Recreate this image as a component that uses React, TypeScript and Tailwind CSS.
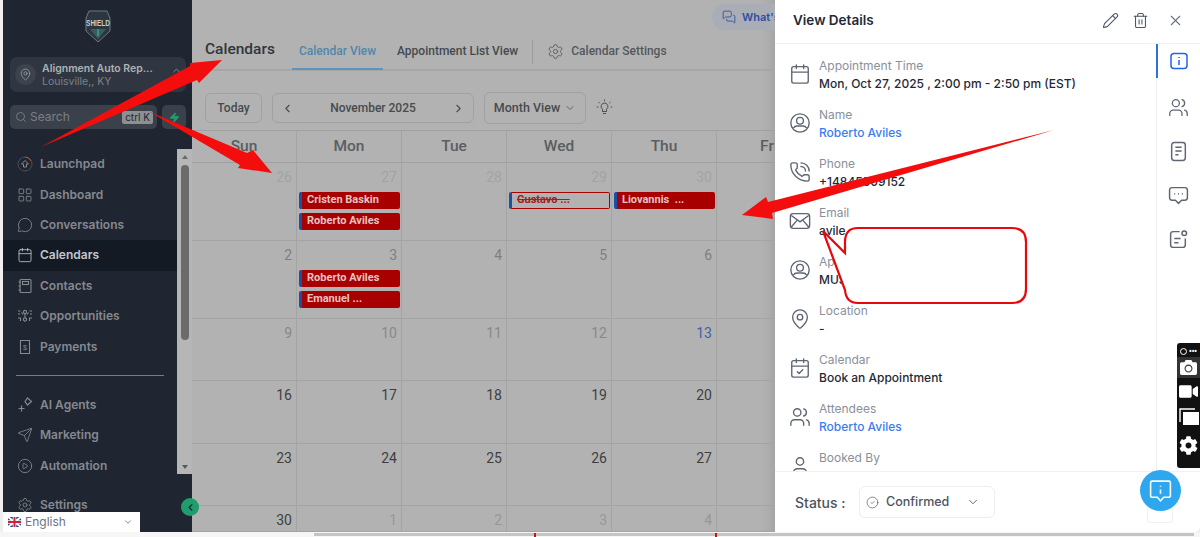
import React from 'react';
import {
  Calendar, CalendarCheck, ChevronDown, ChevronLeft, ChevronRight, ChevronUp, CircleCheck,
  LayoutGrid, MapPin, MessageCircle, MessagesSquare, Pencil,
  PhoneCall, Search, Send, Settings, Trash2, User, Users, X, Zap, CirclePlay,
} from 'lucide-react';
import { FaCamera, FaCog, FaVideo } from 'react-icons/fa';

type IconProps = { size?: number; strokeWidth?: number; className?: string };

const LaunchpadIcon = ({ size = 16 }: IconProps) => (
  <svg width={size} height={size} viewBox="0 0 16 16" fill="none" stroke="currentColor" strokeWidth="1">
    <circle cx="8" cy="8" r="7" stroke="#4a4f57" />
    <path d="M8 1 A7 7 0 0 1 14 5" stroke="#b5562d" />
    <path d="M8 4.5 L11.5 8 H9.5 V11 H6.5 V8 H4.5 Z" />
  </svg>
);

const ContactsIcon = ({ size = 16 }: IconProps) => (
  <svg width={size} height={size} viewBox="0 0 16 16" fill="none" stroke="currentColor" strokeWidth="1.1">
    <rect x="3" y="1.5" width="11" height="13" rx="1" />
    <rect x="5.5" y="3.5" width="6" height="3" />
    <path d="M1.5 4 H4 M1.5 8 H4 M1.5 12 H4" />
  </svg>
);

const OpportunitiesIcon = ({ size = 16 }: IconProps) => (
  <svg width={size} height={size} viewBox="0 0 16 16" fill="none" stroke="currentColor" strokeWidth="1.1">
    <circle cx="8" cy="4" r="1.6" />
    <circle cx="8" cy="11.5" r="1.6" />
    <path d="M1 3 H3.5 M1 6 H3 M12.5 3 H15 M13 6 H15 M1 10 H3.5 L3.5 13 M15 10 H12.5 L12.5 13 M8 6 V9.5" />
    <path d="M4.5 4.5 L6 6.5 M11.5 4.5 L10 6.5" />
  </svg>
);

const PaymentsIcon = ({ size = 16 }: IconProps) => (
  <svg width={size} height={size} viewBox="0 0 16 16" fill="none" stroke="currentColor" strokeWidth="1.1">
    <path d="M3 1.5 H13 M3.5 1.5 V14.5 H12.5 V1.5" />
    <text x="8" y="11" textAnchor="middle" fontSize="7" stroke="none" fill="currentColor" fontFamily="Liberation Sans, sans-serif">$</text>
  </svg>
);

const AgentsIcon = ({ size = 16 }: IconProps) => (
  <svg width={size} height={size} viewBox="0 0 16 16" fill="none" stroke="currentColor" strokeWidth="1.2">
    <path d="M10.5 1 L14.5 4.5 L10.5 8 L8 4.5 Z" />
    <path d="M4.5 8.5 V14.5 M1.5 11.5 H7.5" />
  </svg>
);

const BulbIcon = () => (
  <svg width="17" height="17" viewBox="0 0 17 17" fill="none" stroke="#4b4f52" strokeWidth="1">
    <path d="M8.5 4 A3.5 3.5 0 0 1 10.5 10.3 V12.5 H6.5 V10.3 A3.5 3.5 0 0 1 8.5 4 Z" />
    <path d="M7 14.5 H10 M8.5 .5 V2.2 M2.5 3 L3.7 4.2 M14.5 3 L13.3 4.2 M.8 8 H2.4 M14.6 8 H16.2" />
  </svg>
);

const PersonCircleIcon = ({ size = 24, className }: IconProps) => (
  <svg width={size} height={size} viewBox="0 0 24 24" fill="none" stroke="currentColor" strokeWidth="1.5" className={className}>
    <circle cx="12" cy="12" r="10" />
    <circle cx="12" cy="9.5" r="3.7" />
    <path d="M4.8 17.5 Q6 15.3 9 15.3 H15 Q18 15.3 19.2 17.5" />
  </svg>
);

const EnvelopeIcon = ({ size = 24, className }: IconProps) => (
  <svg width={size} height={size} viewBox="0 0 24 24" fill="none" stroke="currentColor" strokeWidth="1.5" className={className}>
    <rect x="1.5" y="4" width="21" height="16" rx="3" />
    <path d="M2.5 6 L12 13 L21.5 6 M2.5 18.5 L9 11 M21.5 18.5 L15 11" />
  </svg>
);

const InfoSquareIcon = ({ size = 20 }: IconProps) => (
  <svg width={size} height={size} viewBox="0 0 20 20" fill="none" stroke="currentColor" strokeWidth="1.5">
    <rect x="2" y="2.5" width="16" height="15" rx="3" />
    <path d="M10 6 V7 M10 9 V14" />
  </svg>
);

const NotesIcon = ({ size = 20 }: IconProps) => (
  <svg width={size} height={size} viewBox="0 0 20 20" fill="none" stroke="currentColor" strokeWidth="1.4">
    <rect x="3.5" y="1.5" width="13" height="17" rx="2.5" />
    <path d="M7 6 H13 M7 9.5 H13 M7 13 H10" />
  </svg>
);

const ChatDotsIcon = ({ size = 20 }: IconProps) => (
  <svg width={size} height={size} viewBox="0 0 20 20" fill="none" stroke="currentColor" strokeWidth="1.4">
    <path d="M4 2.5 H16 Q18.5 2.5 18.5 5 V12 Q18.5 14.5 16 14.5 H13 L10 17.5 L7 14.5 H4 Q1.5 14.5 1.5 12 V5 Q1.5 2.5 4 2.5 Z" />
    <path d="M6 8.5 H6.8 M9.6 8.5 H10.4 M13.2 8.5 H14" strokeWidth="1.8" />
  </svg>
);

const TaskNoteIcon = ({ size = 20 }: IconProps) => (
  <svg width={size} height={size} viewBox="0 0 20 20" fill="none" stroke="currentColor" strokeWidth="1.4">
    <path d="M11 2.5 H5 Q2.5 2.5 2.5 5 V15 Q2.5 17.5 5 17.5 H14 Q16.5 17.5 16.5 15 V9" />
    <circle cx="15.5" cy="4" r="2.2" />
    <path d="M6 9 H12 M6 13 H10" />
  </svg>
);

const navTop = [
  { label: 'Launchpad', icon: LaunchpadIcon },
  { label: 'Dashboard', icon: LayoutGrid },
  { label: 'Conversations', icon: MessageCircle },
  { label: 'Calendars', icon: Calendar, active: true },
  { label: 'Contacts', icon: ContactsIcon },
  { label: 'Opportunities', icon: OpportunitiesIcon },
  { label: 'Payments', icon: PaymentsIcon },
];

const navBottom = [
  { label: 'AI Agents', icon: AgentsIcon },
  { label: 'Marketing', icon: Send },
  { label: 'Automation', icon: CirclePlay },
];

type NavEntry = { label: string; icon: React.ElementType; active?: boolean };

const NavItem = ({ item }: { item: NavEntry }) => {
  const Icon = item.icon;
  return (
    <div className={`flex h-[30.4px] items-center gap-[7px] pl-[14px] ${item.active ? 'bg-[#141a24] text-[#c3c6ca]' : 'text-[#85898f]'}`}>
      <Icon size={16} strokeWidth={1.25} />
      <span className="text-[12px] font-semibold">{item.label}</span>
    </div>
  );
};

const Sidebar = () => (
  <aside className="flex w-[189px] shrink-0 flex-col font-['Inter',sans-serif]">
    {/* logo, location, search */}
    <div className="h-[149px] bg-[#1f2631] pt-[10px] pl-[7px] pr-[6px]">
      <div className="flex h-[33px] flex-col items-center">
        <svg width="28" height="33" viewBox="0 0 28 33" fill="none">
          <path d="M2 8 L5 1 H23 L26 8 V21 L14 32 L2 21 Z" fill="#2b3640" stroke="#6f777d" strokeWidth="1" />
          <path d="M6 19 H22 L14 29 Z" fill="#3f5a5c" />
          <path d="M13 19 h2 v7 h-2 z" fill="#1f9d85" />
          <text transform="translate(14 15.5) scale(1 1.5)" textAnchor="middle" fontSize="6.5" fontWeight="700" fill="#c9cdd0" fontFamily="Liberation Sans, sans-serif">SHIELD</text>
        </svg>
      </div>
      <div className="mt-[14px] flex h-[35px] items-center rounded-[7px] bg-[#2f3641] pl-[5px] pr-[4px]">
        <div className="flex h-[21px] w-[21px] items-center justify-center rounded-full bg-[#3c434d]">
          <MapPin size={13} strokeWidth={1.5} className="text-[#9a9ea3]" />
        </div>
        <div className="ml-[6px] flex-1 leading-[13px]">
          <div className="text-[10.5px] font-semibold text-[#aeb1b5]">Alignment Auto Rep...</div>
          <div className="text-[10.5px] text-[#7d8187]">Louisville,, KY</div>
        </div>
        <div className="flex flex-col items-center text-[#8b8f94]">
          <ChevronUp size={11} />
          <ChevronDown size={11} className="-mt-[3px]" />
        </div>
      </div>
      <div className="mt-[13px] flex items-center gap-[5px]">
        <div className="flex h-[24px] w-[147px] items-center rounded-[5px] bg-[#3a414b] pl-[5px] pr-[4px] text-[#7b7f85]">
          <Search size={12} strokeWidth={1.75} />
          <span className="ml-[3px] flex-1 text-[12px]">Search</span>
          <span className="rounded-[2px] bg-[#8d8f92] px-[3px] text-[10px] leading-[13px] text-[#1f2631]">ctrl K</span>
        </div>
        <div className="flex h-[24px] w-[24px] items-center justify-center rounded-[5px] bg-[#3a414b]">
          <Zap size={11} className="fill-[#1f9d6c] text-[#1f9d6c]" />
        </div>
      </div>
    </div>
    {/* nav with its scrollbar */}
    <div className="flex h-[325px]">
      <div className="w-[174px] bg-[#1f2631]">
        {navTop.map((item) => <NavItem key={item.label} item={item} />)}
        <div className="ml-[13px] mt-[13px] mb-[14px] h-px w-[148px] bg-[#787d84]" />
        {navBottom.map((item) => <NavItem key={item.label} item={item} />)}
      </div>
      <div className="flex w-[15px] flex-col items-center bg-[#b6b6b6] pt-[6px]">
        <div className="h-0 w-0 border-x-[3px] border-b-[4px] border-x-transparent border-b-[#6a6a6a]" />
        <div className="mt-[6px] h-[175px] w-[8px] rounded-full bg-[#6b6b6b]" />
        <div className="mt-auto mb-[5px] h-0 w-0 border-x-[3px] border-t-[4px] border-x-transparent border-t-[#5a5a5a]" />
      </div>
    </div>
    <div className="flex-1 bg-[#1f2631] pt-[16px]">
      <NavItem item={{ label: 'Settings', icon: Settings }} />
    </div>
  </aside>
);

const weekdays = ['Sun', 'Mon', 'Tue', 'Wed', 'Thu', 'Fri'];

type Ev = { name: string; cancelled?: boolean };
type Day = { n: number; tone: string; events?: Ev[] };

const dim = 'text-[#a3a3a3]';
const mid = 'text-[#7f7f7f]';
const mid2 = 'text-[#898989]';
const dark = 'text-[#3f3f3f]';
const next = 'text-[#979797]';

// Friday's numbers sit behind the details panel, so those cells stay empty
const weeks: (Day | null)[][] = [
  [
    { n: 26, tone: dim },
    { n: 27, tone: dim, events: [{ name: 'Cristen Baskin' }, { name: 'Roberto Aviles' }] },
    { n: 28, tone: dim },
    { n: 29, tone: dim, events: [{ name: 'Gustavo ...', cancelled: true }] },
    { n: 30, tone: dim, events: [{ name: 'Liovannis  ...' }] },
    null,
  ],
  [
    { n: 2, tone: mid },
    { n: 3, tone: mid, events: [{ name: 'Roberto Aviles' }, { name: 'Emanuel ...' }] },
    { n: 4, tone: mid },
    { n: 5, tone: mid },
    { n: 6, tone: mid },
    null,
  ],
  [
    { n: 9, tone: mid2 },
    { n: 10, tone: mid2 },
    { n: 11, tone: mid2 },
    { n: 12, tone: mid2 },
    { n: 13, tone: 'text-[#3f5fae]' },
    null,
  ],
  [...[16, 17, 18, 19, 20].map((n) => ({ n, tone: dark })), null],
  [...[23, 24, 25, 26, 27].map((n) => ({ n, tone: dark })), null],
  [
    { n: 30, tone: dark },
    { n: 1, tone: next },
    { n: 2, tone: next },
    { n: 3, tone: next },
    { n: 4, tone: next },
    null,
  ],
];

const EventChip = ({ ev }: { ev: Ev }) =>
  ev.cancelled ? (
    <div className="flex h-[17px] w-[101px] items-center rounded-[2px] border border-[#a80000] border-l-[3px] border-l-[#1c4fa8] pl-[5px] text-[11px] font-bold text-[#a02020] line-through">
      {ev.name}
    </div>
  ) : (
    <div className="flex h-[17px] w-[101px] items-center rounded-[2px] border-l-[3px] border-l-[#1c4fa8] bg-[#a80000] pl-[5px] text-[11px] font-bold whitespace-pre text-[#e6c3c3]">
      {ev.name}
    </div>
  );

const CalendarGrid = () => (
  <div className="w-[630px] flex-1 overflow-hidden font-['Roboto',sans-serif]">
    <div className="grid h-[33px] grid-cols-[105px_105px_105px_105px_105px_105px] border-y border-[#a0a0a0]">
      {weekdays.map((d) => (
        <div key={d} className="flex items-center justify-center border-r border-[#a4a4a4] pt-[1px] text-[15.5px] font-medium text-[#5a5e60]">{d}</div>
      ))}
    </div>
    <div className="grid grid-cols-[105px_105px_105px_105px_105px_105px] grid-rows-[78px_78px_62px_63px_62px_26px]">
      {weeks.flat().map((day, i) => (
        <div key={i} className="overflow-hidden border-r border-b border-[#a4a4a4] pt-[5px] pl-[2px] pr-[4px]">
          {day && <div className={`h-[21px] text-right text-[14px] leading-[18px] ${day.tone}`}>{day.n}</div>}
          <div className="mt-[3px] flex flex-col gap-[3.5px]">
            {day?.events?.map((ev) => <EventChip key={ev.name} ev={ev} />)}
          </div>
        </div>
      ))}
    </div>
  </div>
);

const MainArea = () => (
  <main className="relative flex min-w-0 flex-1 flex-col overflow-hidden bg-[#b2b2b2] shadow-[inset_-14px_0_14px_-12px_rgba(0,0,0,0.12)]">
    {/* top strip */}
    <div className="flex h-[35px] shrink-0 items-start pt-[4px] pl-[520px]">
      <div className="flex h-[26px] w-[90px] shrink-0 items-center gap-[6px] rounded-full bg-[#a8adb6] pl-[10px] font-['Inter',sans-serif] text-[11px] font-semibold text-[#2f4f9e]">
        <MessagesSquare size={14} strokeWidth={1.5} />
        <span>What's</span>
      </div>
    </div>
    {/* title + tabs */}
    <div className="flex h-[36px] shrink-0 items-start border-b-2 border-[#a6a6a6] pl-[13px] font-['Roboto',sans-serif]">
      <span className="mt-[2px] w-[69px] text-[15.5px] leading-[24px] font-medium text-[#333638]">Calendars</span>
      <div className="ml-[18px] flex h-[35px] w-[91px] justify-center border-b-2 border-[#5d94b8] pt-[7px] text-[12px] font-medium text-[#4f87ad]">Calendar View</div>
      <span className="ml-[14px] mt-[7px] text-[12px] font-medium text-[#454a4e]">Appointment List View</span>
      <div className="ml-[14px] mt-[5px] h-[24px] w-px bg-[#9a9a9a]" />
      <Settings size={17} strokeWidth={1.25} className="ml-[14px] mt-[8px] text-[#55595c]" />
      <span className="ml-[7px] mt-[7px] text-[12px] font-medium text-[#54585b]">Calendar Settings</span>
    </div>
    {/* toolbar */}
    <div className="flex h-[59px] shrink-0 items-start pl-[13px] pt-[22px] font-['Roboto',sans-serif] text-[12px] font-medium text-[#474b4e]">
      <div className="flex h-[30px] w-[57px] items-center justify-center rounded-[6px] border border-[#a0a0a0]">Today</div>
      <div className="ml-[10px] flex h-[30px] w-[202px] items-center justify-between rounded-[6px] border border-[#a0a0a0] px-[8px]">
        <ChevronLeft size={13} />
        <span>November 2025</span>
        <ChevronRight size={13} />
      </div>
      <div className="ml-[10px] -mt-px flex h-[32px] w-[102px] items-center justify-center gap-[4px] rounded-[6px] border border-[#a0a0a0] text-[12.5px]">
        Month View <ChevronDown size={12} strokeWidth={1.5} />
      </div>
      <div className="ml-[10px] mt-[6px]"><BulbIcon /></div>
    </div>
    <CalendarGrid />
  </main>
);

type DetailRow = { label: string; value: string; icon: React.ElementType; link?: boolean };

const details: DetailRow[] = [
  { label: 'Appointment Time', value: 'Mon, Oct 27, 2025 , 2:00 pm - 2:50 pm (EST)', icon: Calendar },
  { label: 'Name', value: 'Roberto Aviles', icon: PersonCircleIcon, link: true },
  { label: 'Phone', value: '+14845509152', icon: PhoneCall },
  { label: 'Email', value: 'avile', icon: EnvelopeIcon },
  { label: 'App', value: 'MUS', icon: PersonCircleIcon },
  { label: 'Location', value: '-', icon: MapPin },
  { label: 'Calendar', value: 'Book an Appointment', icon: CalendarCheck },
  { label: 'Attendees', value: 'Roberto Aviles', icon: Users, link: true },
  { label: 'Booked By', value: '', icon: User },
];

const railIcons = [Users, NotesIcon, ChatDotsIcon, TaskNoteIcon];

const DetailsPanel = () => (
  <section className="flex w-[425px] shrink-0 flex-col rounded-br-[6px] bg-white font-['Inter',sans-serif]">
    <header className="flex h-[44px] shrink-0 items-center border-b border-[#f0f1f3] pb-[2px] pl-[18px] pr-[16px] text-[#4b5563]">
      <h2 className="flex-1 text-[13.5px] font-semibold text-[#1f2937]">View Details</h2>
      <Pencil size={17} strokeWidth={1.5} />
      <Trash2 size={17} strokeWidth={1.5} className="ml-[13px]" />
      <X size={17} strokeWidth={1.5} className="ml-[18px] text-[#6b7280]" />
    </header>
    <div className="flex min-h-0 flex-1">
      <div className="flex-1 overflow-hidden pt-[12px] pl-[14px]">
        {details.map((row) => {
          const Icon = row.icon;
          return (
            <div key={row.label} className="flex h-[49px] shrink-0 items-start">
              <Icon size={24} strokeWidth={1.5} className="mt-[6px] w-[22px] shrink-0 text-[#5f6673]" />
              <div className="ml-[8px]">
                <div className="h-[19px] text-[12px] leading-[20px] text-[#8a909b]">{row.label}</div>
                <div className={`text-[12px] leading-[18px] font-medium ${row.link ? 'text-[#3b7cf0]' : 'text-[#1f2937]'}`}>{row.value}</div>
              </div>
            </div>
          );
        })}
      </div>
      <div className="w-[44px] shrink-0 border-l border-[#eef0f2]">
        <div className="-ml-px flex h-[34px] items-center justify-center border-l-2 border-[#2f6fe0] text-[#2563eb]">
          <InfoSquareIcon size={20} />
        </div>
        <div className="mt-[19px] flex flex-col items-center gap-[23px] text-[#5f6673]">
          {railIcons.map((Icon, i) => <Icon key={i} size={21} strokeWidth={1.5} />)}
        </div>
      </div>
    </div>
    <footer className="flex h-[61px] shrink-0 items-center border-t border-[#f0f1f3] pl-[20px]">
      <span className="w-[64px] text-[14px] font-medium text-[#4b5563]">Status :</span>
      <div className="flex h-[32px] w-[136px] items-center rounded-[6px] border border-[#eceef0] pl-[6px] pr-[14px] text-[#4b5563]">
        <CircleCheck size={13} strokeWidth={1.25} />
        <span className="ml-[7px] flex-1 text-[12.5px] font-medium">Confirmed</span>
        <ChevronDown size={14} strokeWidth={1.5} />
      </div>
    </footer>
  </section>
);

// red markup drawn on top of the screenshot
const Annotations = () => (
  <svg className="pointer-events-none absolute inset-0" width="1200" height="537" viewBox="0 0 1200 537">
    <polygon points="41,147 190,66 190,63 222,60 199,83 197,80" fill="#f30d0d" />
    <polygon points="150,112 247,153 253,150 272,173 238,168 240,165" fill="#f30d0d" />
    <polygon points="1054,130 768,202 766,197 742,215 773,219 772,213" fill="#f30d0d" />
    <path d="M858 228 H1012 Q1026 228 1026 242 V289 Q1026 303 1012 303 H858 Q846 303 845 290 L823 231 L845 253 V242 Q845 228 858 228 Z" fill="#fff" stroke="#e8070d" strokeWidth="2.2" />
    <path d="M535 533 V537 M716 533 V537" stroke="#d01010" strokeWidth="2" />
  </svg>
);

export default function App() {
  return (
    <div className="relative flex h-[537px] w-[1200px] flex-col overflow-hidden bg-[#efefef]">
      <div className="flex h-[532px] pl-[3px]">
        <Sidebar />
        <MainArea />
        <DetailsPanel />
      </div>
      <div className="flex h-[5px] items-center bg-[#f6f6f6] pl-[314px]">
        <div className="h-[3px] w-[880px] bg-[#c4c4c4]" />
      </div>

      {/* sidebar collapse */}
      <button className="absolute left-[181px] top-[498px] flex h-[18px] w-[18px] items-center justify-center rounded-full bg-[#1f9d6c] text-[#123]">
        <ChevronLeft size={11} strokeWidth={2.5} />
      </button>

      {/* translate widget */}
      <div className="absolute left-[3px] top-[512px] flex h-[20px] w-[137px] items-center bg-white pl-[5px] pr-[7px] font-['Inter',sans-serif] text-[#6b7280]">
        <svg width="13" height="10" viewBox="0 0 13 10">
          <rect width="13" height="10" fill="#2b3f87" />
          <path d="M0 0 L13 10 M13 0 L0 10" stroke="#fff" strokeWidth="2" />
          <path d="M6.5 0 V10 M0 5 H13" stroke="#fff" strokeWidth="3.5" />
          <path d="M6.5 0 V10 M0 5 H13" stroke="#d0213a" strokeWidth="2" />
        </svg>
        <span className="ml-[4px] flex-1 text-[12px]">English</span>
        <ChevronDown size={10} />
      </div>

      <Annotations />

      {/* recorder toolbar */}
      <div className="absolute left-[1177px] top-[343px] flex h-[125px] w-[23px] flex-col items-center rounded-l-[3px] bg-[#111] text-white">
        <div className="flex h-[14px] w-full items-center justify-center gap-[2px] pt-[2px]">
          <span className="h-[7px] w-[7px] rounded-full border border-white" />
          <span className="text-[7px] leading-[7px] font-bold">•••</span>
        </div>
        <div className="flex h-[21px] w-full items-center justify-center bg-[#333]">
          <FaCamera size={17} />
        </div>
        <div className="flex h-[26px] items-center justify-center"><FaVideo size={19} /></div>
        <div className="flex h-[26px] items-center justify-center">
          <svg width="20" height="18" viewBox="0 0 20 18" fill="none">
            <path d="M1 14 V1 H16" stroke="#fff" strokeWidth="1.4" />
            <rect x="4" y="4" width="16" height="13" fill="#fff" />
          </svg>
        </div>
        <div className="flex h-[30px] items-center justify-center"><FaCog size={19} /></div>
      </div>

      {/* faint box under the chat bubble */}
      <div className="absolute left-[1147px] top-[505px] h-[18px] w-[26px] rounded-[3px] border border-[#f0f1f3]" />

      {/* support chat bubble */}
      <div className="absolute left-[1140px] top-[470px] flex h-[41px] w-[41px] items-center justify-center rounded-full bg-[#2ea7ef] text-white">
        <svg width="25" height="25" viewBox="0 0 24 24" fill="none" stroke="currentColor" strokeWidth="1.5">
          <path d="M4 3 H20 Q21.5 3 21.5 4.5 V17 Q21.5 18.5 20 18.5 H15 L12 22 L9 18.5 H4 Q2.5 18.5 2.5 17 V4.5 Q2.5 3 4 3 Z" />
          <path d="M12 7.5 V8.5 M12 11 V15" />
        </svg>
      </div>
    </div>
  );
}
